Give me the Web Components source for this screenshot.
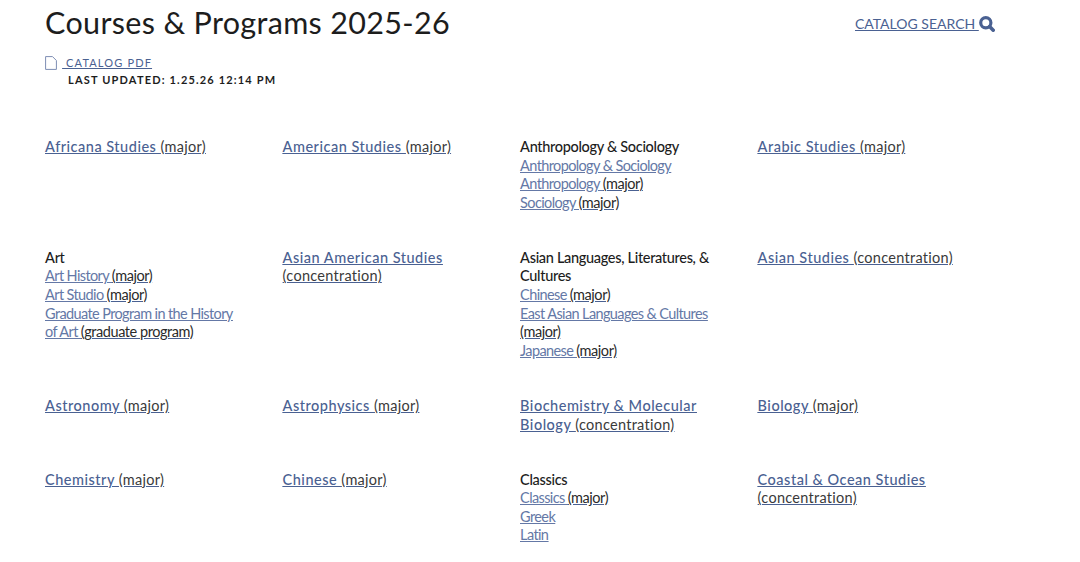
<!DOCTYPE html>
<html><head><meta charset="utf-8"><style>
html,body{margin:0;background:#fff}
body{font-family:Lato,"Liberation Sans",sans-serif;color:#1a1a1a;overflow:hidden;height:562px}
</style></head><body>
<template id="page-t"><style>
:host{display:block;padding:0 0 0 45.1px;width:1035px;box-sizing:border-box}
.grid{display:grid;grid-template-columns:repeat(4,237.5px);row-gap:36.5px;margin-top:50px}
</style><slot name="head"></slot><div class="grid"><slot></slot></div></template>

<template id="head-t"><style>
:host{display:block}
.top{display:flex;align-items:flex-start;height:45px}
h1{margin:0;font:400 30.5px/44px Lato,sans-serif;letter-spacing:.33px;color:#1d1d1d;flex:0 0 809.9px}
a{color:#4a6192}
.search{font-size:14px;line-height:20px;margin-top:14px;white-space:nowrap;letter-spacing:0}
.pdf{display:flex;align-items:center;height:18px;font-size:11px;letter-spacing:1.15px;margin-top:8px}
.pdf svg{width:12px;height:14px;margin:1px 5px 0 0}
.pdf a{white-space:pre}
.upd{font-size:11px;font-weight:700;letter-spacing:1.17px;color:#1d1d1d;line-height:17px;padding-left:23px}
</style>
<div class="top"><h1>Courses &amp; Programs 2025-26</h1>
<a class="search" href="#">CATALOG SEARCH&nbsp;</a><svg style="width:16px;height:16px;margin:16px 0 0 0" viewBox="0 0 16 16"><circle cx="6.8" cy="6.8" r="5.1" fill="none" stroke="#4a6192" stroke-width="3.2"/><path d="M10.6 10.6 14.2 14.2" stroke="#4a6192" stroke-width="3.6" stroke-linecap="round"/></svg></div>
<div class="pdf"><svg viewBox="0 0 12 14"><path d="M.6.6H7.5L11.4 4.5V13.4H.6Z" fill="none" stroke="#7d8db3" stroke-width="1"/></svg><a href="#"> CATALOG PDF</a></div>
<div class="upd">LAST UPDATED: 1.25.26 12:14 PM</div></template>

<template id="cell-t"><style>
:host{display:block;font-size:14.5px;line-height:18.6px;width:200px}
::slotted(b){font-weight:500;display:block;color:#1d1d1d;letter-spacing:-.32px}
</style><slot></slot></template>

<template id="link-t"><style>
:host{display:block;color:#2a2a2a;text-decoration:underline;text-decoration-color:#4a6192;letter-spacing:-.45px}
a{color:#6478a6;text-decoration:underline;font-weight:400;letter-spacing:-.62px}
:host([strong]){letter-spacing:.28px;color:#3a3a3a}
:host([strong]) a{color:#4a6192;font-weight:500;letter-spacing:.5px}
</style><a href="#"><slot name="t"></slot></a><slot></slot></template>

<cat-page>
<cat-head slot="head"></cat-head>
<cat-cell><cat-link strong><span slot="t">Africana Studies </span>(major)</cat-link></cat-cell>
<cat-cell><cat-link strong><span slot="t">American Studies </span>(major)</cat-link></cat-cell>
<cat-cell><b>Anthropology &amp; Sociology</b><cat-link><span slot="t">Anthropology &amp; Sociology</span></cat-link><cat-link><span slot="t">Anthropology </span>(major)</cat-link><cat-link><span slot="t">Sociology </span>(major)</cat-link></cat-cell>
<cat-cell><cat-link strong><span slot="t">Arabic Studies </span>(major)</cat-link></cat-cell>

<cat-cell><b>Art</b><cat-link><span slot="t">Art History </span>(major)</cat-link><cat-link><span slot="t">Art Studio </span>(major)</cat-link><cat-link><span slot="t">Graduate Program in the History of Art </span>(graduate program)</cat-link></cat-cell>
<cat-cell><cat-link strong><span slot="t">Asian American Studies </span>(concentration)</cat-link></cat-cell>
<cat-cell><b>Asian Languages, Literatures, &amp; Cultures</b><cat-link><span slot="t">Chinese </span>(major)</cat-link><cat-link><span slot="t">East Asian Languages &amp; Cultures </span>(major)</cat-link><cat-link><span slot="t">Japanese </span>(major)</cat-link></cat-cell>
<cat-cell><cat-link strong><span slot="t">Asian Studies </span>(concentration)</cat-link></cat-cell>

<cat-cell><cat-link strong><span slot="t">Astronomy </span>(major)</cat-link></cat-cell>
<cat-cell><cat-link strong><span slot="t">Astrophysics </span>(major)</cat-link></cat-cell>
<cat-cell><cat-link strong><span slot="t">Biochemistry &amp; Molecular Biology </span>(concentration)</cat-link></cat-cell>
<cat-cell><cat-link strong><span slot="t">Biology </span>(major)</cat-link></cat-cell>

<cat-cell><cat-link strong><span slot="t">Chemistry </span>(major)</cat-link></cat-cell>
<cat-cell><cat-link strong><span slot="t">Chinese </span>(major)</cat-link></cat-cell>
<cat-cell><b>Classics</b><cat-link><span slot="t">Classics </span>(major)</cat-link><cat-link><span slot="t">Greek</span></cat-link><cat-link><span slot="t">Latin</span></cat-link></cat-cell>
<cat-cell><cat-link strong><span slot="t">Coastal &amp; Ocean Studies </span>(concentration)</cat-link></cat-cell>
</cat-page>
<script>
for(const [n,t] of [['cat-page','page-t'],['cat-head','head-t'],['cat-cell','cell-t'],['cat-link','link-t']]){
customElements.define(n,class extends HTMLElement{constructor(){super();this.attachShadow({mode:'open'}).appendChild(document.getElementById(t).content.cloneNode(true));}});
}
</script>
</body></html>
